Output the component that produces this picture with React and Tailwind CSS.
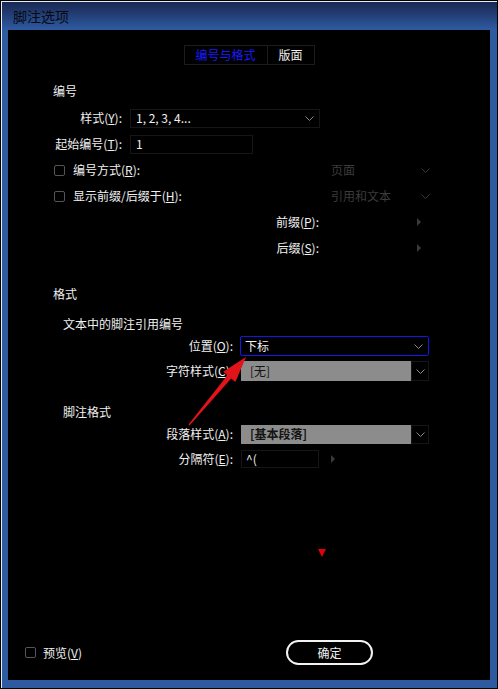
import React from 'react';

const font = { fontFamily: '"Noto Sans CJK SC", "Noto Sans", sans-serif' };

function Chevron({ color = "#8a8a8a" }) {
  return (
    <svg width="9" height="5" viewBox="0 0 9 5">
      <path d="M0.5 0.5 L4.5 4.5 L8.5 0.5" fill="none" stroke={color} strokeWidth="1" />
    </svg>
  );
}

function Tri() {
  return (
    <svg width="4" height="8" viewBox="0 0 4 8">
      <path d="M0 0 L4 4 L0 8 Z" fill="#3a3a3a" />
    </svg>
  );
}

function Check() {
  return <span className="block w-[11px] h-[11px] border border-[#555] rounded-[2px] shrink-0" />;
}

function Label({ width, children }) {
  return (
    <div className="text-right whitespace-nowrap shrink-0" style={{ width }}>
      {children}
    </div>
  );
}

export default function App() {
  return (
    <div className="w-[498px] h-[689px] bg-black relative text-[12px] leading-4 text-[#f0f0f0]" style={font}>
      {/* window frame */}
      <div className="absolute left-[1px] top-[1px] w-[496px] h-[687px] border-t border-l border-[#e6eef8] bg-[#2e5ba0] flex flex-col">
        <div className="h-[28px] shrink-0 bg-gradient-to-b from-[#192852] to-[#2f5ba3] flex items-center pl-[11px]">
          <span className="text-[14px] text-[#050a14]">脚注选项</span>
        </div>

        {/* body */}
        <div className="ml-[6px] w-[482px] h-[650px] bg-black flex flex-col relative">
          {/* tabs */}
          <div className="mt-[15px] mx-auto flex h-[20px] border border-[#1c1c1c]">
            <div className="w-[83px] flex items-center justify-center border-r border-[#1c1c1c] text-[#1a1aff]">编号与格式</div>
            <div className="w-[46px] flex items-center justify-center">版面</div>
          </div>

          <div className="mt-[18px] pl-[45px]">编号</div>

          {/* 样式 */}
          <div className="mt-[6px] h-[26px] flex items-center">
            <Label width={114}>样式(<u>Y</u>):</Label>
            <div className="ml-[8px] w-[190px] h-[19px] border border-[#161616] flex items-center pl-[5px] pr-[5px]">
              <span className="flex-1">1, 2, 3, 4...</span>
              <Chevron />
            </div>
          </div>

          {/* 起始编号 */}
          <div className="h-[26px] flex items-center">
            <Label width={114}>起始编号(<u>T</u>):</Label>
            <div className="ml-[8px] w-[123px] h-[19px] border border-[#161616] flex items-center pl-[5px]">1</div>
          </div>

          {/* 编号方式 */}
          <div className="h-[26px] flex items-center pl-[46px]">
            <Check />
            <span className="ml-[8px] w-[258px]">编号方式(<u>R</u>):</span>
            <div className="w-[99px] flex items-center text-[#3c3c3c]">
              <span className="flex-1">页面</span>
              <Chevron color="#3a3a3a" />
            </div>
          </div>

          {/* 显示前缀 */}
          <div className="h-[26px] flex items-center pl-[46px]">
            <Check />
            <span className="ml-[8px] w-[258px]">显示前缀/后缀于(<u>H</u>):</span>
            <div className="w-[99px] flex items-center text-[#3c3c3c]">
              <span className="flex-1">引用和文本</span>
              <Chevron color="#3a3a3a" />
            </div>
          </div>

          {/* 前缀 */}
          <div className="h-[26px] flex items-center">
            <Label width={311}>前缀(<u>P</u>):</Label>
            <div className="ml-[98px]"><Tri /></div>
          </div>

          {/* 后缀 */}
          <div className="h-[26px] flex items-center">
            <Label width={311}>后缀(<u>S</u>):</Label>
            <div className="ml-[98px]"><Tri /></div>
          </div>

          <div className="mt-[25px] pl-[45px]">格式</div>
          <div className="mt-[14px] pl-[55px]">文本中的脚注引用编号</div>

          {/* 位置 */}
          <div className="mt-[3px] h-[22px] flex items-center">
            <Label width={225}>位置(<u>O</u>):</Label>
            <div className="ml-[7px] w-[189px] h-[20px] border border-[#1515e6] rounded-[2px] flex items-center pl-[4px] pr-[5px]">
              <span className="flex-1">下标</span>
              <Chevron />
            </div>
          </div>

          {/* 字符样式 */}
          <div className="mt-[3px] h-[22px] flex items-center">
            <div className="w-[233px] shrink-0 overflow-hidden whitespace-nowrap pl-[158px]">字符样式(<u>C</u>):</div>
            <div className="w-[170px] h-[20px] bg-[#8c8c8c] flex items-center pl-[9px] text-[#141414]">[无]</div>
            <div className="w-[18px] h-[20px] border border-[#161616] flex items-center justify-center">
              <Chevron />
            </div>
          </div>

          <div className="mt-[22px] pl-[55px]">脚注格式</div>

          {/* 段落样式 */}
          <div className="mt-[3px] h-[22px] flex items-center">
            <Label width={225}>段落样式(<u>A</u>):</Label>
            <div className="ml-[8px] w-[170px] h-[19px] bg-[#8c8c8c] flex items-center pl-[9px] text-[#141414] font-bold">[基本段落]</div>
            <div className="w-[18px] h-[19px] border border-[#161616] flex items-center justify-center">
              <Chevron />
            </div>
          </div>

          {/* 分隔符 */}
          <div className="mt-[3px] h-[22px] flex items-center">
            <Label width={225}>分隔符(<u>E</u>):</Label>
            <div className="ml-[8px] w-[78px] h-[18px] border border-[#161616] flex items-center pl-[4px]">^(</div>
            <div className="ml-[12px]"><Tri /></div>
          </div>

          {/* footer */}
          <div className="mt-auto mb-[15px] h-[25px] flex items-center">
            <div className="w-[278px] flex items-center pl-[17px]">
              <Check />
              <span className="ml-[7px]">预览(<u>V</u>)</span>
            </div>
            <button className="w-[87px] h-[25px] rounded-full border-2 border-[#f2f2f2] flex items-center justify-center text-[#f0f0f0]">确定</button>
          </div>

          {/* annotations */}
          <svg className="absolute left-0 top-0 pointer-events-none" width="482" height="650">
            <path d="M180.5 394.6 L219.4 345.3 L215.2 341.8 L238 327 L227.4 352 L223.2 348.5 L181.5 395.4 Z" fill="#e0141a" />
            <path d="M310 519 L318 519 L314 527 Z" fill="#e0000a" />
          </svg>
        </div>
      </div>
    </div>
  );
}
